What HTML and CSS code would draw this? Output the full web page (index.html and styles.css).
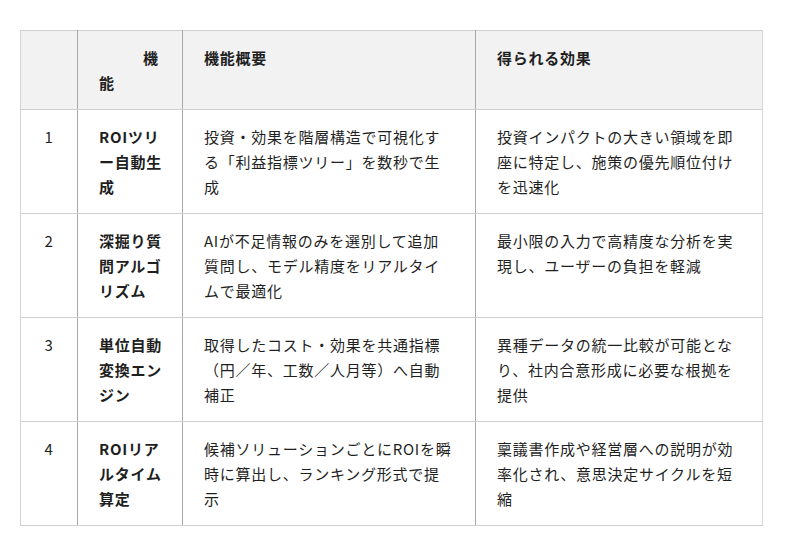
FILE: index.html
```html
<!DOCTYPE html>
<html lang="ja">
<head>
<meta charset="utf-8">
<link rel="stylesheet" href="styles.css">
</head>
<body>
<table class="features">
  <colgroup>
    <col class="c-no">
    <col class="c-name">
    <col class="c-desc">
    <col class="c-effect">
  </colgroup>
  <thead>
    <tr>
      <th class="no"></th>
      <th class="name name-head">機能</th>
      <th>機能概要</th>
      <th>得られる効果</th>
    </tr>
  </thead>
  <tbody>
    <tr>
      <td class="no">1</td>
      <td class="name">ROIツリー自動生成</td>
      <td>投資・効果を階層構造で可視化する「利益指標ツリー」を数秒で生成</td>
      <td>投資インパクトの大きい領域を即座に特定し、施策の優先順位付けを迅速化</td>
    </tr>
    <tr>
      <td class="no">2</td>
      <td class="name">深掘り質問アルゴリズム</td>
      <td>AIが不足情報のみを選別して追加質問し、モデル精度をリアルタイムで最適化</td>
      <td>最小限の入力で高精度な分析を実現し、ユーザーの負担を軽減</td>
    </tr>
    <tr>
      <td class="no">3</td>
      <td class="name">単位自動変換エンジン</td>
      <td>取得したコスト・効果を共通指標（円／年、工数／人月等）へ自動補正</td>
      <td>異種データの統一比較が可能となり、社内合意形成に必要な根拠を提供</td>
    </tr>
    <tr>
      <td class="no">4</td>
      <td class="name">ROIリアルタイム算定</td>
      <td>候補ソリューションごとにROIを瞬時に算出し、ランキング形式で提示</td>
      <td>稟議書作成や経営層への説明が効率化され、意思決定サイクルを短縮</td>
    </tr>
  </tbody>
</table>
</body>
</html>
```

FILE: styles.css
```css
html, body {
  margin: 0;
  padding: 0;
  background: #ffffff;
}

body {
  padding: 30px 20px;
  font-family: "Noto Sans CJK JP", "Noto Sans", sans-serif;
  font-size: 15px;
  line-height: 25px;
  color: #1f1f1f;
  letter-spacing: 0.05em;
}

.features {
  border-collapse: collapse;
  table-layout: fixed;
  width: 742px;
}

.c-no { width: 57px; }
.c-name { width: 105px; }
.c-desc { width: 293px; }
.c-effect { width: 287px; }

.features th,
.features td {
  border-top: 1px solid #cfcfcf;
  border-bottom: 1px solid #cfcfcf;
  border-left: 1px solid #a8a8a8;
  border-right: 1px solid #a8a8a8;
  padding: 14px 21px;
  vertical-align: top;
  text-align: left;
  word-break: break-all;
}

.features tr > :first-child {
  border-left-color: #d4d4d4;
}

.features tr > :last-child {
  border-right-color: #d9d9d9;
}

.features th {
  background: #f2f2f2;
  font-weight: 700;
}

.features td.no {
  text-align: center;
  padding-left: 4px;
  padding-right: 4px;
}

.features td.name {
  font-weight: 700;
  padding-right: 14px;
}

.features th.name-head {
  text-indent: 44px;
  padding-right: 18px;
}
```
